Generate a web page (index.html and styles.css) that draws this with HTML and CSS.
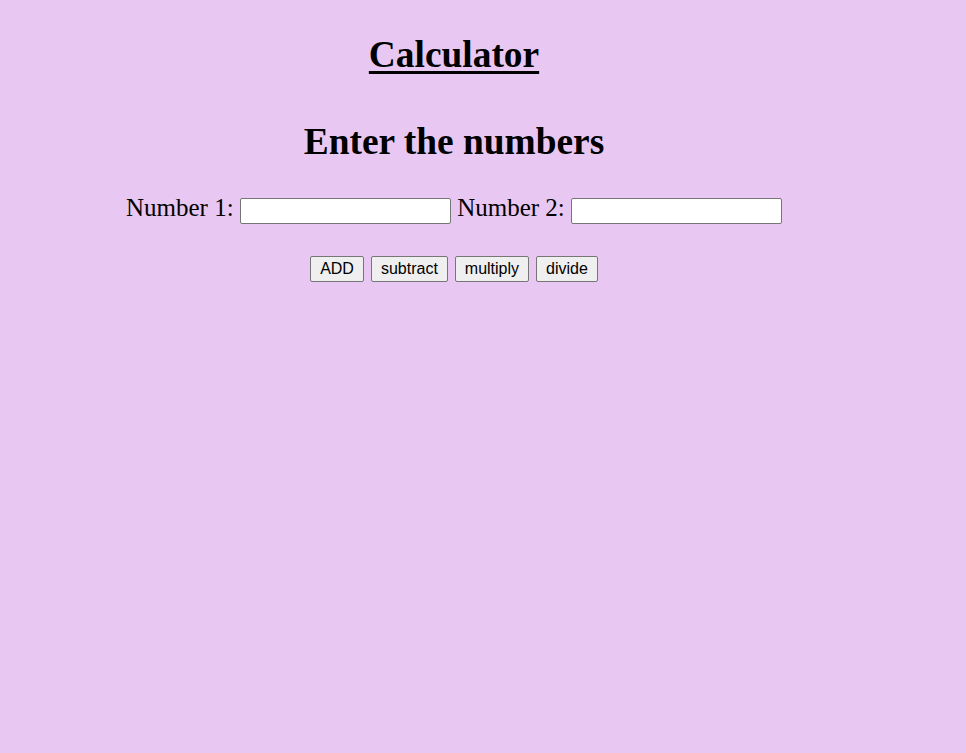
FILE: index.html
```html
<!DOCTYPE html>
<html lang="en">
<head>
<meta charset="utf-8">
<title>Calculator</title>
<link rel="stylesheet" href="styles.css">
</head>
<body>
<div class="page">
  <h1 class="title">Calculator</h1>
  <h1 class="subtitle">Enter the numbers</h1>
  <div class="inputs">
    <label>Number 1:</label> <input type="text" class="num"> <label>Number 2:</label> <input type="text" class="num">
  </div>
  <div class="buttons">
    <button class="btn">ADD</button>
    <button class="btn">subtract</button>
    <button class="btn">multiply</button>
    <button class="btn">divide</button>
  </div>
</div>
</body>
</html>
```

FILE: styles.css
```css
html, body {
  margin: 0;
  padding: 0;
  background: #e8c8f2;
  min-height: 100%;
}
body {
  font-family: "Liberation Serif", "Times New Roman", serif;
  color: #000;
  height: 753px;
}
.page {
  width: 892px;
  margin-left: 8px;
  text-align: center;
  padding-top: 34px;
}
.title, .subtitle {
  font-size: 37.4px;
  font-weight: bold;
  line-height: 42px;
  margin: 0;
}
.title {
  text-decoration: underline;
  text-underline-offset: 4px;
  text-decoration-thickness: 3px;
}
.subtitle {
  margin-top: 45px;
}
.inputs {
  margin-top: 30px;
  font-size: 25px;
  line-height: 29px;
}
.num {
  box-sizing: border-box;
  width: 211px;
  height: 26px;
  border: 1px solid #767676;
  border-radius: 2px;
  background: #fff;
  font-family: "Liberation Sans", Arial, sans-serif;
  font-size: 16px;
  padding: 1px 3px;
  vertical-align: baseline;
}
.buttons {
  margin-top: 32px;
  display: flex;
  justify-content: center;
  gap: 7px;
}
.btn {
  box-sizing: border-box;
  height: 26px;
  padding: 0 9px;
  font-family: "Liberation Sans", Arial, sans-serif;
  font-size: 16px;
  color: #000;
  background: #efefef;
  border: 1px solid #767676;
  border-radius: 2px;
}
```
